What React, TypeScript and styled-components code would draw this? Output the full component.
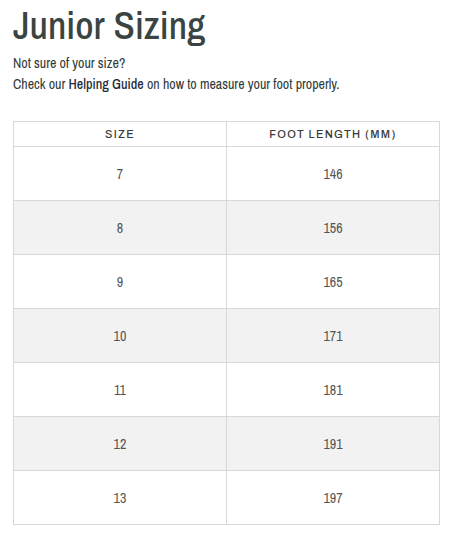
import React from "react";
import styled, { createGlobalStyle } from "styled-components";

const Global = createGlobalStyle`
  html, body { margin: 0; padding: 0; background: #fff; }
  body { font-family: "Archivo Narrow", "Roboto Condensed", sans-serif; }
`;

const Page = styled.div`
  padding: 0 14px 0 13px;
`;

const Title = styled.h1`
  margin: 0;
  padding-top: 2px;
  font-family: "Archivo Narrow", "Roboto Condensed", sans-serif;
  font-size: 39px;
  line-height: 46px;
  font-weight: 500;
  color: #3a4442;
`;

const Para = styled.p`
  margin: 5px 0 0;
  font-size: 14px;
  line-height: 21px;
  color: #2f3a38;
`;

const Link = styled.a`
  color: #1f2b3a;
  text-decoration: none;
  font-weight: 500;
`;

const Table = styled.table`
  margin-top: 26px;
  width: 427px;
  border-collapse: collapse;
  table-layout: fixed;
`;

const Th = styled.th`
  height: 24px;
  padding: 0;
  border: 1px solid #d8d8d8;
  font-family: "Archivo", "Roboto", sans-serif;
  font-size: 11px;
  font-weight: 500;
  letter-spacing: 1.3px;
  color: #3a3a3a;
  text-align: center;
  vertical-align: middle;
`;

const Row = styled.tr<{ $shade: boolean }>`
  background: ${(p) => (p.$shade ? "#f2f2f2" : "#fff")};
`;

const Td = styled.td`
  height: 53px;
  padding: 0;
  border: 1px solid #d8d8d8;
  font-size: 14px;
  color: #555;
  text-align: center;
  vertical-align: middle;
`;

const data: [string, string][] = [
  ["7", "146"],
  ["8", "156"],
  ["9", "165"],
  ["10", "171"],
  ["11", "181"],
  ["12", "191"],
  ["13", "197"],
];

export default function App() {
  return (
    <Page>
      <Global />
      <Title>Junior Sizing</Title>
      <Para>
        Not sure of your size?
        <br />
        Check our <Link href="#">Helping Guide</Link> on how to measure your foot properly.
      </Para>
      <Table>
        <thead>
          <tr>
            <Th>SIZE</Th>
            <Th>FOOT LENGTH (MM)</Th>
          </tr>
        </thead>
        <tbody>
          {data.map(([s, l], i) => (
            <Row key={s} $shade={i % 2 === 1}>
              <Td>{s}</Td>
              <Td>{l}</Td>
            </Row>
          ))}
        </tbody>
      </Table>
    </Page>
  );
}
